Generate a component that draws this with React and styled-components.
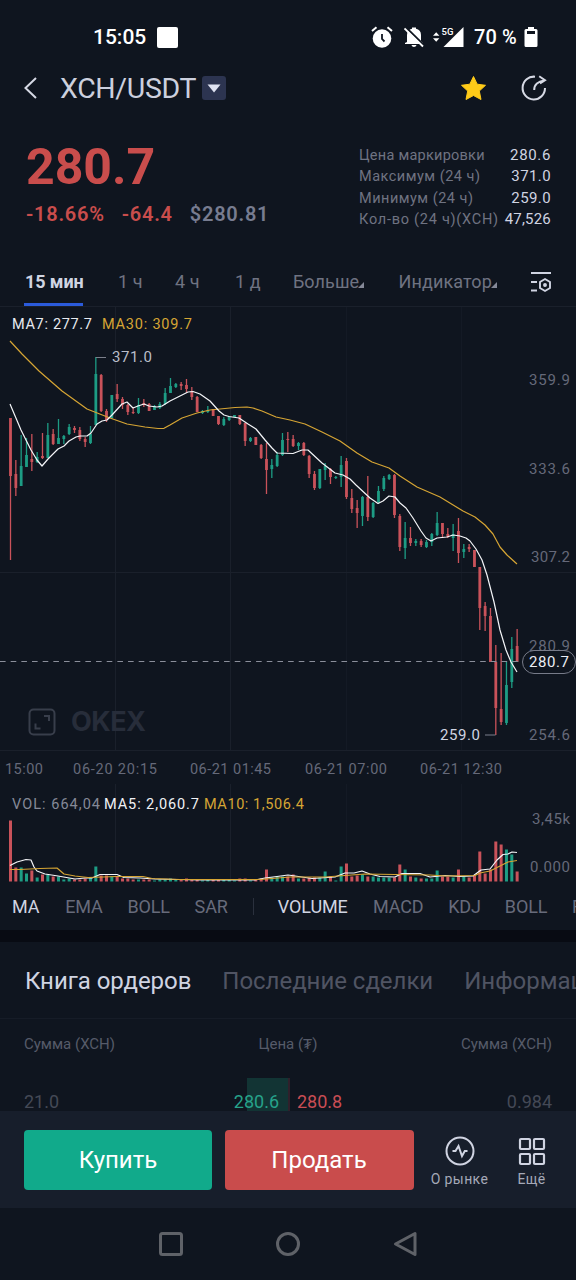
import React from 'react';
import styled, { createGlobalStyle } from 'styled-components';


const GlobalStyle = createGlobalStyle`
    * {
        box-sizing: border-box;
    }
    body {
        margin: 0;
        background: #0f151f;
        font-family: Roboto, 'Liberation Sans', sans-serif;
        color: #d0d4e2;
    }
    svg {
        display: block;
        flex: none;
    }
`
const Screen = styled.div`
    display: flex;
    flex-direction: column;
    width: 576px;
    height: 1280px;
    overflow: hidden;
    background: #0f151f;
`
const Label = styled.span`
    font-size: ${({ size }) => size || 16}px;
    font-weight: ${({ weight }) => weight || 400};
    letter-spacing: ${({ spacing }) => spacing || 0}px;
    color: ${({ color }) => color || '#6f7382'};
    white-space: pre;
`
const StatusBar = styled.div`
    display: flex;
    align-items: center;
    justify-content: space-between;
    height: 74px;
    padding: 0 38px 0 93px;
`
const StatusGroup = styled.div`
    display: flex;
    align-items: center;
    gap: ${({ gap }) => gap}px;
`
const StatusSquare = styled.div`
    width: 21px;
    height: 21px;
    border-radius: 2px;
    background: #ffffff;
`
const BellIcon = styled.svg`
    margin-left: 11px;
`
const SignalIcon = styled.svg`
    margin-left: 9px;
`
const Battery = styled.div`
    flex: none;
    width: 60px;
    padding-left: 10px;
    font-size: 20px;
    font-weight: 500;
    letter-spacing: 0.1px;
    white-space: nowrap;
    color: #ffffff;
`
const Header = styled.div`
    display: flex;
    align-items: center;
    height: 28px;
    padding: 0 29px 0 23px;
`
const PairName = styled.h1`
    width: 137px;
    margin: 0 5px 0 22px;
    font-size: 28.5px;
    font-weight: 400;
    letter-spacing: -0.35px;
    white-space: nowrap;
    color: #ccd0de;
`
const PairMenu = styled.button`
    display: flex;
    align-items: center;
    justify-content: center;
    width: 24px;
    height: 24px;
    margin-right: auto;
    padding: 0;
    border: 0;
    border-radius: 3px;
    background: #2c3450;
`
const HeaderIcons = styled.div`
    display: flex;
    align-items: center;
    gap: 33px;
`
const Summary = styled.div`
    display: flex;
    justify-content: space-between;
    height: 156px;
    padding: 34px 25px 0 26px;
`
const Price = styled.div`
    height: 62px;
    font-size: 50px;
    line-height: 62px;
    font-weight: 700;
    color: #c94d4c;
`
const Changes = styled.div`
    display: flex;
    gap: 17px;
    line-height: 32px;
`
const Stats = styled.div`
    width: 192px;
    padding-top: 9px;
`
const StatRow = styled.div`
    display: flex;
    justify-content: space-between;
    height: 21.4px;
    line-height: 21.4px;
`
const Periods = styled.div`
    display: flex;
    align-items: stretch;
    height: 49px;
    padding: 0 24px;
    border-bottom: 1px solid #1a202b;
`
const Period = styled.div`
    display: flex;
    align-items: center;
    width: ${({ width }) => width}px;
    margin-right: ${({ after }) => after}px;
    padding: 2px 0 0 1px;
    border-bottom: 3px solid ${({ active }) => active ? '#2b5bdb' : 'transparent'};
`
const Corner = styled.i`
    margin: 7px 0 0 -1px;
    border-left: 6px solid transparent;
    border-bottom: 6px solid #858998;
`
const SettingsIcon = styled.svg`
    margin-top: 13px;
`
const ChartArea = styled.div`
    height: 575px;
`
const Indicators = styled.div`
    display: flex;
    align-items: center;
    height: 48px;
    padding: 0 0 0 12px;
    overflow: hidden;
`
const Indicator = styled.div`
    flex: none;
    width: ${({ width }) => width}px;
    margin-right: 24.2px;
    font-size: 18px;
    letter-spacing: -0.1px;
    white-space: nowrap;
    color: ${({ active }) => active ? '#d0d4e2' : '#676b7b'};
`
const IndicatorSplit = styled.div`
    flex: none;
    width: 1px;
    height: 17px;
    margin-right: 24px;
    background: #2a303d;
`
const Divider = styled.div`
    height: 12px;
    background: #080b13;
`
const BookTabs = styled.div`
    display: flex;
    align-items: center;
    gap: 31px;
    height: 77px;
    padding: 2px 0 0 25px;
    border-bottom: 1px solid #161c27;
    overflow: hidden;
`
const BookHead = styled.div`
    display: grid;
    grid-template-columns: 1fr 1fr 1fr;
    align-items: center;
    height: 50px;
    padding: 0 24px;
    text-align: center;

    > :first-child {
        text-align: left;
    }
    > :last-child {
        text-align: right;
    }
`
const BookRows = styled.div`
    display: grid;
    grid-template-columns: 1fr 1fr;
    height: 42px;
    padding: 9px 24px 0;
    overflow: hidden;
`
const BookSide = styled.div`
    display: flex;
    justify-content: space-between;
    height: 48px;
    line-height: 48px;
    padding: ${({ bid }) => bid ? '0 9px 0 0' : '0 0 0 9px'};
    background: ${({ bid }) => bid
        ? 'linear-gradient(to left, #123434 41px, transparent 41px)'
        : 'linear-gradient(to right, #30202b 2px, transparent 2px)'};
`
const TradeBar = styled.div`
    display: flex;
    align-items: center;
    height: 97px;
    padding: 0 24px;
    background: #171e2b;
`
const TradeButton = styled.button`
    width: ${({ width }) => width}px;
    height: 60px;
    margin-right: ${({ after }) => after}px;
    padding: 0;
    border: 0;
    border-radius: 4px;
    font: 400 24px Roboto, 'Liberation Sans', sans-serif;
    color: #ffffff;
    background: ${({ buy }) => buy ? '#11aa8b' : '#c94c4c'};
`
const TradeLink = styled.div`
    display: flex;
    flex-direction: column;
    align-items: center;
    gap: 4px;
    width: ${({ width }) => width}px;
    height: 60px;
    margin-left: ${({ before }) => before || 0}px;
    padding-top: 5px;
`
const NavBar = styled.div`
    display: flex;
    align-items: center;
    justify-content: center;
    gap: 91px;
    height: 72px;
`

const RED = '#c9525a'
const GREEN = '#1d9c84'
const STEP = 5.333

// colour, high, body top, body bottom, low, volume
const candles = [
    ['r', 418, 418, 476, 560, 61], ['r', 460, 474, 488, 496, 14], ['g', 435, 466, 486, 486, 14], ['g', 438, 455, 467, 467, 8],
    ['r', 434, 459, 462, 471, 11], ['g', 452, 457, 462, 463, 4], ['r', 433, 456, 458, 459, 7], ['g', 423, 435, 458, 458, 7],
    ['r', 429, 434, 444, 445, 5], ['g', 419, 438, 444, 444, 5], ['g', 435, 436, 439, 444, 2], ['g', 424, 427, 434, 435, 3],
    ['r', 426, 428, 430, 433, 2], ['r', 427, 430, 439, 441, 2], ['r', 437, 439, 442, 447, 3], ['g', 426, 434, 443, 444, 4],
    ['g', 357, 374, 425, 425, 15], ['r', 374, 375, 411, 412, 6], ['r', 409, 411, 420, 422, 6], ['g', 395, 395, 418, 419, 5],
    ['r', 384, 394, 399, 402, 5], ['r', 397, 399, 405, 409, 3], ['r', 404, 405, 412, 415, 3], ['r', 407, 412, 413, 414, 2],
    ['g', 398, 405, 413, 414, 2], ['r', 399, 403, 405, 407, 2], ['r', 403, 404, 411, 411, 2], ['g', 405, 406, 410, 410, 1],
    ['g', 402, 404, 408, 409, 2], ['g', 388, 393, 404, 405, 2], ['g', 378, 386, 393, 393, 3], ['g', 383, 384, 387, 388, 2],
    ['r', 382, 384, 386, 390, 2], ['r', 379, 385, 389, 393, 3], ['r', 387, 391, 397, 400, 2], ['r', 396, 397, 412, 412, 2],
    ['g', 410, 411, 413, 414, 1], ['g', 406, 410, 412, 413, 2], ['r', 409, 409, 416, 416, 2], ['r', 416, 416, 424, 425, 2],
    ['g', 417, 419, 425, 426, 2], ['g', 416, 417, 420, 421, 2], ['g', 415, 415, 417, 417, 1], ['r', 415, 415, 424, 425, 3],
    ['r', 423, 423, 441, 446, 3], ['g', 437, 438, 441, 442, 1], ['r', 437, 437, 445, 445, 2], ['r', 444, 445, 458, 459, 3],
    ['r', 443, 459, 470, 494, 12], ['g', 459, 465, 469, 478, 4], ['g', 452, 455, 466, 467, 5], ['g', 433, 440, 455, 456, 5],
    ['r', 432, 439, 440, 452, 5], ['r', 435, 439, 446, 447, 7], ['g', 442, 443, 446, 450, 3], ['r', 442, 443, 455, 456, 3],
    ['r', 455, 456, 474, 478, 4], ['r', 471, 474, 488, 490, 4], ['g', 469, 469, 488, 489, 4], ['g', 463, 466, 470, 480, 10],
    ['r', 468, 469, 477, 484, 5], ['g', 476, 477, 478, 479, 1], ['g', 456, 465, 477, 487, 15], ['r', 458, 461, 497, 499, 18],
    ['r', 489, 498, 509, 513, 5], ['r', 500, 508, 513, 528, 6], ['g', 496, 497, 516, 526, 7], ['r', 476, 497, 517, 521, 5],
    ['g', 502, 503, 517, 518, 5], ['g', 486, 491, 502, 503, 4], ['g', 476, 478, 489, 491, 4], ['g', 474, 475, 479, 480, 4],
    ['r', 474, 475, 515, 518, 4], ['r', 514, 516, 547, 551, 17], ['g', 522, 538, 548, 559, 12], ['r', 527, 538, 543, 546, 5],
    ['g', 539, 541, 543, 546, 4], ['r', 539, 541, 545, 547, 3], ['g', 540, 542, 547, 548, 3], ['g', 533, 534, 542, 546, 3],
    ['g', 512, 523, 535, 536, 11], ['r', 523, 523, 534, 538, 5], ['r', 528, 534, 537, 538, 5], ['g', 524, 534, 538, 551, 4],
    ['r', 518, 531, 553, 563, 12], ['g', 544, 549, 552, 558, 5], ['r', 544, 547, 549, 552, 4], ['r', 550, 550, 567, 567, 6],
    ['r', 567, 567, 608, 630, 30], ['r', 602, 606, 616, 631, 8], ['r', 608, 616, 662, 662, 12], ['r', 645, 662, 708, 735, 40],
    ['r', 653, 709, 722, 725, 37], ['g', 661, 685, 723, 725, 32], ['g', 637, 649, 682, 688, 27], ['r', 629, 646, 662, 662, 10],
]

const ma7 = '10,404 21,430 31,450 37,460 42,466 48,459 58,449 64,446 69,441 76,437 80,436 87,436 91,433 97,424 102,421 107,420 112,415 122,404 127,402 133,408 138,406 144,404 149,406 157,407 162,406 170,401 180,396 188,392 193,391.5 200,394 210,401 219,411 224,415 229,416.5 239,418 248,424 256,429 265,440 272,448 277,453 293,453.5 302,450 308,450 322,463 335,473 343,475 350,479 356,485 370,498 378,503.5 383,501 389,496 395,497 400,503 406,508 413,518 421,531 426,538 431,541 437,538 447,537 453,535 460,536 466,538 470,541 476,549 482,560 487,575 494,602 500,630 506,650 511,662 517,672'
const ma30 = '10,341 22,354 39,371 62,391 87,409 110,418 127,424 145,427 158,428.5 164,428.3 170,425 182,418 197,413 210,410 235,407.5 247,407 253,408 262,411 276,417 290,420 305,424 322,432 340,441 357,453 372,462 389,468 400,476 417,487 440,497 463,511 475,517 485,525 493,534 500,547 507,555 517,564'
const vol5 = '10,865.5 17,862 26,859.5 31,860 34,867 37,871 45,874 58,876 75,879 85,878 92,878 100,874.5 117,874.5 124,877.5 140,878 155,879 200,880 255,880 265,878 277,876.5 288,875 295,876 312,878.5 335,877 345,873 354,873 362,871 370,874 380,876.5 395,877 402,873.5 420,873.5 430,877 445,875.5 460,876.5 473,876 481,870 490,869 497,860 503,854.5 508,854 512,852 517,852.5'
const vol10 = '10,869.5 20,869.5 40,868.5 57,868 64,874 75,876 88,877.5 117,876.5 143,876.5 152,878.5 180,879.5 260,879.5 290,877 325,877 345,875.5 365,874 395,874.5 430,875 445,876 475,875.5 480,873 490,871 500,866 508,862 517,860.5'

function BigNumber({ x, y, children, width, color = '#656979', size = 15 }) {
    return (
        <text x={x} y={y} fill={color} fontSize={size} textLength={width} lengthAdjust="spacing">
            {children}
        </text>
    )
}

function Chart() {
    return (
        <ChartArea>
            <svg width="576" height="575" viewBox="0 307 576 575" fontFamily="Roboto, sans-serif">
                <g stroke="#1a202b" strokeWidth="1">
                    <path d="M115.500 307V751M230.500 307V751M115.500 784V882M230.500 784V882" />
                    <path d="M346.500 307V751M461.500 307V751M346.500 784V882M461.500 784V882" opacity="0.5" />
                    <path d="M0 572.500H576M0 750.500H576" />
                </g>

                <g fill="none" stroke="#383e4b" strokeWidth="2">
                    <rect x="29.500" y="709.500" width="25" height="25" rx="4" />
                    <path d="M44 716H49V721M40.500 728.500H35.500V723.500" />
                </g>
                <text x="71" y="731" fill="#272d3a" fontFamily="Inter, sans-serif" fontSize="27" fontWeight="700" textLength="75" lengthAdjust="spacing">OKEX</text>

                {candles.map(([side, high, top, bottom, low, volume], index) => {
                    const x = 10.5 + index * STEP
                    const color = side === 'r' ? RED : GREEN
                    return (
                        <g key={index} fill={color}>
                            <rect x={x - 0.65} y={high} width="1.3" height={low - high} />
                            <rect x={x - 1.4} y={top} width="2.8" height={Math.max(bottom - top, 1)} />
                            <rect x={x - 1.5} y={881.5 - volume} width="3" height={volume} />
                        </g>
                    )
                })}

                <path d="M0 661.500H523" stroke="#8b8f9b" strokeWidth="1.200" strokeDasharray="5.600 5.070" />
                <g fill="none" strokeWidth="1.200" strokeLinejoin="round">
                    <polyline points={ma30} stroke="#d6a534" />
                    <polyline points={ma7} stroke="#f4f5f8" />
                    <polyline points={vol5} stroke="#f4f5f8" />
                    <polyline points={vol10} stroke="#d6a534" />
                    <path d="M95.800 357.500H106M485 735H495.500" stroke="#7b7f8b" />
                </g>

                <BigNumber x={12} y={329} width={80} color="#e8eaf0" size={14.5}>MA7: 277.7</BigNumber>
                <BigNumber x={102} y={329} width={90} color="#d6a534" size={14.5}>MA30: 309.7</BigNumber>
                <BigNumber x={112} y={362} width={40} color="#b9bdc9">371.0</BigNumber>
                <BigNumber x={440} y={740} width={40} color="#d0d4e2">259.0</BigNumber>
                <BigNumber x={529} y={385} width={41}>359.9</BigNumber>
                <BigNumber x={529} y={474} width={41}>333.6</BigNumber>
                <BigNumber x={531} y={562} width={39}>307.2</BigNumber>
                <BigNumber x={529} y={651} width={41}>280.9</BigNumber>
                <BigNumber x={529} y={740} width={41}>254.6</BigNumber>

                <rect x="522.500" y="650.500" width="53" height="23" rx="11.500" fill="#0f151f" stroke="#777b89" />
                <BigNumber x={529} y={667} width={40} color="#eceef4">280.7</BigNumber>

                <BigNumber x={5} y={773.5} width={38} size={14.5}>15:00</BigNumber>
                <BigNumber x={73} y={773.5} width={84} size={14.5}>06-20 20:15</BigNumber>
                <BigNumber x={190} y={773.5} width={81} size={14.5}>06-21 01:45</BigNumber>
                <BigNumber x={305} y={773.5} width={82} size={14.5}>06-21 07:00</BigNumber>
                <BigNumber x={420} y={773.5} width={82} size={14.5}>06-21 12:30</BigNumber>

                <BigNumber x={12} y={809} width={88} color="#858997" size={14.5}>VOL: 664,04</BigNumber>
                <BigNumber x={104} y={809} width={95} color="#f0f1f5" size={14.5}>MA5: 2,060.7</BigNumber>
                <BigNumber x={204} y={809} width={100} color="#d6a534" size={14.5}>MA10: 1,506.4</BigNumber>
                <BigNumber x={532} y={824} width={38}>3,45k</BigNumber>
                <BigNumber x={530} y={872} width={40}>0.000</BigNumber>
            </svg>
        </ChartArea>
    )
}

function StatusIcons() {
    return (
        <StatusGroup gap={0}>
            <svg width="22" height="22" viewBox="0 0 22 22">
                <circle cx="11" cy="12.500" r="9.300" fill="#fff" />
                <path d="M1 5L5.500 1.200M16.500 1.200L21 5" stroke="#fff" strokeWidth="2" />
                <path d="M11 8V13L13.500 15.500" fill="none" stroke="#0f151f" strokeWidth="1.800" />
            </svg>
            <BellIcon width="20" height="22" viewBox="0 0 20 22">
                <path d="M3 16V9C3 5.500 5 3.500 8 2.800V1.500H12V2.800C15 3.500 17 5.500 17 9V15L19 17V18H1V17ZM7.500 19H12.500C12 21.500 8 21.500 7.500 19Z" fill="#fff" />
                <path d="M1.700 1.300L20 19.300" stroke="#0f151f" strokeWidth="2.200" />
                <path d="M.5 2.500L19 20.500" stroke="#fff" strokeWidth="1.800" />
            </BellIcon>
            <SignalIcon width="31" height="22" viewBox="0 0 31 22">
                <path d="M0 9.700L3.200 6.200L6.400 9.700ZM0 12.300L3.200 15.800L6.400 12.300ZM30.500 1V21H10.500Z" fill="#fff" />
                <text x="8.500" y="9" fontSize="9.500" fontWeight="500" fill="#fff" stroke="#0f151f" strokeWidth="2.500" paintOrder="stroke">5G</text>
            </SignalIcon>
            <Battery>70 %</Battery>
            <svg width="14" height="22" viewBox="0 0 14 22">
                <path d="M4 1H10V3H12Q13.500 3 13.500 4.500V19.500Q13.500 21 12 21H2Q.5 21 .5 19.500V4.500Q.5 3 2 3H4Z" fill="#fff" />
                <path d="M3 5H11V8H3Z" fill="#0f151f" />
            </svg>
        </StatusGroup>
    )
}

const stats = [
    { name: 'Цена маркировки', value: '280.6', spacing: 0.25, valueSpacing: 0.65 },
    { name: 'Максимум (24 ч)', value: '371.0', spacing: 0.5, valueSpacing: 0.4 },
    { name: 'Минимум (24 ч)', value: '259.0', spacing: 0.5, valueSpacing: 0.4 },
    { name: 'Кол-во (24 ч)(XCH)', value: '47,526', spacing: 0.75, valueSpacing: 0.2 },
]
const periods = [
    { name: '15 мин', width: 59, after: 34, active: true },
    { name: '1 ч', width: 24, after: 33 },
    { name: '4 ч', width: 26, after: 34 },
    { name: '1 д', width: 24, after: 34 },
    { name: 'Больше', width: 73, after: 33, more: true },
    { name: 'Индикатор', width: 101, after: 33, more: true },
]
const overlays = [
    { name: 'MA', width: 29, active: true },
    { name: 'EMA', width: 38 },
    { name: 'BOLL', width: 43 },
    { name: 'SAR', width: 34 },
]
const oscillators = [
    { name: 'VOLUME', width: 71, active: true },
    { name: 'MACD', width: 51 },
    { name: 'KDJ', width: 32.5 },
    { name: 'BOLL', width: 43 },
    { name: 'RSI', width: 34 },
]

function App() {
    return (
        <>
            <GlobalStyle />
            <Screen>
                <StatusBar>
                    <StatusGroup gap={11}>
                        <Label size={21} weight={500} color="#ffffff">15:05</Label>
                        <StatusSquare />
                    </StatusGroup>
                    <StatusIcons />
                </StatusBar>

                <Header>
                    <svg width="15" height="24" viewBox="0 0 15 24">
                        <path d="M13 2L2.500 12L13 22" fill="none" stroke="#d6d9e4" strokeWidth="2" />
                    </svg>
                    <PairName>XCH/USDT</PairName>
                    <PairMenu>
                        <svg width="14" height="9" viewBox="0 0 14 9"><path d="M.5.5H13.500L7 8.500Z" fill="#dfe3f2" /></svg>
                    </PairMenu>
                    <HeaderIcons>
                        <svg width="28" height="26" viewBox="0 0 28 26">
                            <path d="M13.500 1.500L17.200 9.200L25.500 10.300L19.300 16L21 24.500L13.500 20.500L6 24.500L7.700 16L1.500 10.300L9.800 9.200Z" fill="#ffcb18" stroke="#ffcb18" strokeLinejoin="round" />
                        </svg>
                        <svg width="26" height="28" viewBox="0 0 26 28" fill="none" stroke="#d6d9e4" strokeWidth="2">
                            <path d="M14 2.700A11.200 11.400 0 1 0 24 14" />
                            <path d="M18.200 2.200L24 6.200L19 9.500M23 6.400C17.500 7.300 13 10.500 13.200 16" />
                        </svg>
                    </HeaderIcons>
                </Header>

                <Summary>
                    <div>
                        <Price>280.7</Price>
                        <Changes>
                            <Label size={20} weight={600} spacing={0.75} color="#c94d4c">-18.66%</Label>
                            <Label size={20} weight={600} spacing={0.75} color="#c94d4c">-64.4</Label>
                            <Label size={20} weight={600} spacing={0.75} color="#777c90">$280.81</Label>
                        </Changes>
                    </div>
                    <Stats>
                        {stats.map((item) => (
                            <StatRow key={item.name}>
                                <Label size={14.5} spacing={item.spacing}>{item.name}</Label>
                                <Label size={15} spacing={item.valueSpacing} color="#d0d4e2">{item.value}</Label>
                            </StatRow>
                        ))}
                    </Stats>
                </Summary>

                <Periods>
                    {periods.map((item) => (
                        <Period key={item.name} width={item.width} after={item.after} active={item.active}>
                            <Label size={18} weight={item.active ? 700 : 400} spacing={item.active ? -0.1 : 0.1} color={item.active ? '#d0d4e2' : '#6f7382'}>
                                {item.name}
                            </Label>
                            {item.more && <Corner />}
                        </Period>
                    ))}
                    <SettingsIcon width="21" height="22" viewBox="0 0 21 22" fill="none" stroke="#d0d4e2" strokeWidth="1.900">
                        <path d="M0 2H20M0 11H6M0 19.500H6M14 8L19 11V17L14 20L9 17V11Z" />
                        <circle cx="14" cy="14" r="1" />
                    </SettingsIcon>
                </Periods>

                <Chart />

                <Indicators>
                    {overlays.map((item) => <Indicator key={item.name} width={item.width} active={item.active}>{item.name}</Indicator>)}
                    <IndicatorSplit />
                    {oscillators.map((item) => <Indicator key={item.name} width={item.width} active={item.active}>{item.name}</Indicator>)}
                </Indicators>
                <Divider />

                <BookTabs>
                    <Label size={24} spacing={-0.05} color="#d0d4e2">Книга ордеров</Label>
                    <Label size={24} spacing={-0.03} color="#505463">Последние сделки</Label>
                    <Label size={24} color="#505463">Информация</Label>
                </BookTabs>
                <BookHead>
                    <Label size={15} color="#565b69">Сумма (XCH)</Label>
                    <Label size={15} color="#565b69">Цена (₮)</Label>
                    <Label size={15} color="#565b69">Сумма (XCH)</Label>
                </BookHead>
                <BookRows>
                    <BookSide bid>
                        <Label size={18} color="#444956">21.0</Label>
                        <Label size={18} color="#26a28a">280.6</Label>
                    </BookSide>
                    <BookSide>
                        <Label size={18} color="#c94d54">280.8</Label>
                        <Label size={18} color="#444956">0.984</Label>
                    </BookSide>
                </BookRows>

                <TradeBar>
                    <TradeButton width={188} after={12.5} buy>Купить</TradeButton>
                    <TradeButton width={189} after={12}>Продать</TradeButton>
                    <TradeLink width={68}>
                        <svg width="30" height="32" viewBox="0 0 30 32" fill="none" stroke="#d0d4e2" strokeWidth="2">
                            <circle cx="15" cy="16" r="13.500" />
                            <path d="M7.500 16H10.500L13.500 11L17 21L19.800 16H22.500" />
                        </svg>
                        <Label size={14} spacing={0.4} color="#a5a9b8">О рынке</Label>
                    </TradeLink>
                    <TradeLink width={36} before={20}>
                        <svg width="28" height="32" viewBox="0 0 28 32" fill="none" stroke="#d0d4e2" strokeWidth="2.200">
                            <rect x="2" y="4" width="10" height="10" rx="1" />
                            <rect x="16" y="4" width="10" height="10" rx="1" />
                            <rect x="2" y="19" width="10" height="10" rx="1" />
                            <rect x="16" y="19" width="10" height="10" rx="1" />
                        </svg>
                        <Label size={14} spacing={0.4} color="#a5a9b8">Ещё</Label>
                    </TradeLink>
                </TradeBar>

                <NavBar>
                    <svg width="26" height="26" viewBox="0 0 26 26" fill="none" stroke="#5f6268" strokeWidth="3">
                        <rect x="2.500" y="2.500" width="21" height="21" rx="2" />
                    </svg>
                    <svg width="26" height="26" viewBox="0 0 26 26" fill="none" stroke="#5f6268" strokeWidth="3">
                        <circle cx="13" cy="13" r="10.500" />
                    </svg>
                    <svg width="26" height="26" viewBox="0 0 26 26" fill="none" stroke="#5f6268" strokeWidth="3" strokeLinejoin="round">
                        <path d="M23 2.500V23.500L3.500 13Z" />
                    </svg>
                </NavBar>
            </Screen>
        </>
    )
}

export default App;
